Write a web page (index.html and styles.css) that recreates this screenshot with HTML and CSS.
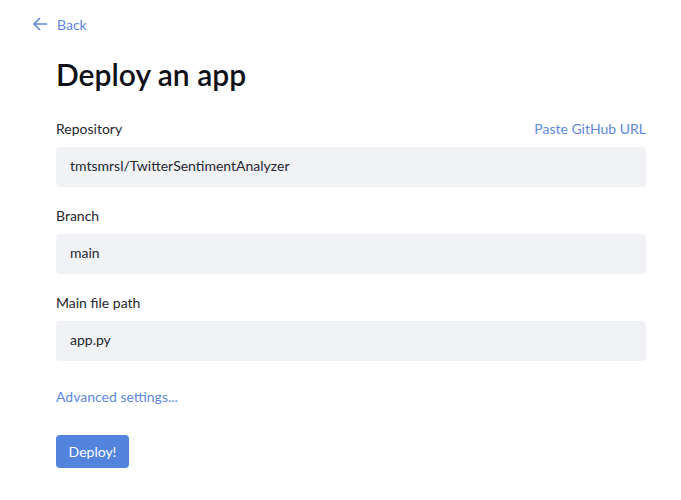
FILE: index.html
```html
<!DOCTYPE html>
<html>
<head>
<meta charset="utf-8">
<link rel="stylesheet" href="styles.css">
</head>
<body>
<div class="page">
  <a class="back" href="#">
    <svg width="16" height="16" viewBox="0 0 16 16" fill="none" stroke="currentColor" stroke-width="1.7" stroke-linecap="round" stroke-linejoin="round"><path d="M14.5 8H2M7.5 2.5L2 8L7.5 13.5"/></svg>
    <span>Back</span>
  </a>
  <main class="form">
    <h1 class="title">Deploy an app</h1>
    <div class="field">
      <div class="label-row"><span class="label">Repository</span><a class="link" href="#">Paste GitHub URL</a></div>
      <div class="input">tmtsmrsl/TwitterSentimentAnalyzer</div>
    </div>
    <div class="field">
      <div class="label-row"><span class="label">Branch</span></div>
      <div class="input">main</div>
    </div>
    <div class="field">
      <div class="label-row"><span class="label">Main file path</span></div>
      <div class="input">app.py</div>
    </div>
    <a class="advanced" href="#">Advanced settings...</a>
    <button class="deploy">Deploy!</button>
  </main>
</div>
</body>
</html>
```
FILE: styles.css
```css
* { box-sizing: border-box; }
body {
  margin: 0;
  background: #fff;
  font-family: "Lato", "Open Sans", sans-serif;
  color: #262730;
}
.page { padding: 15px 35px 0 32px; }
.back {
  display: flex;
  align-items: center;
  gap: 9px;
  color: #6088de;
  text-decoration: none;
  font-size: 14px;
  height: 18px;
}
.back svg { display: block; }
.form {
  margin-left: 24px;
  width: 590px;
  display: flex;
  flex-direction: column;
}
.title {
  margin: 24px 0 0;
  font-size: 30px;
  font-weight: 600;
  line-height: 34px;
  color: #0e1117;
}
.field { display: flex; flex-direction: column; margin-top: 28px; }
.field + .field { margin-top: 19px; }
.label-row {
  display: flex;
  justify-content: space-between;
  align-items: center;
  height: 20px;
  font-size: 14px;
  padding-bottom: 1px;
}
.label { color: #262730; }
.link { color: #6088de; text-decoration: none; }
.input {
  margin-top: 8px;
  height: 40px;
  background: #f0f2f6;
  border-radius: 4px;
  padding: 0 14px 3px;
  display: flex;
  align-items: center;
  font-size: 14px;
  color: #262730;
}
.advanced {
  margin-top: 26px;
  font-size: 14px;
  color: #6088de;
  text-decoration: none;
  line-height: 20px;
}
.deploy {
  margin-top: 28px;
  align-self: flex-start;
  width: 73px;
  height: 33px;
  border: none;
  border-radius: 4px;
  background: #5283dd;
  color: #fff;
  font-family: inherit;
  font-size: 14px;
  padding: 0;
}
```
